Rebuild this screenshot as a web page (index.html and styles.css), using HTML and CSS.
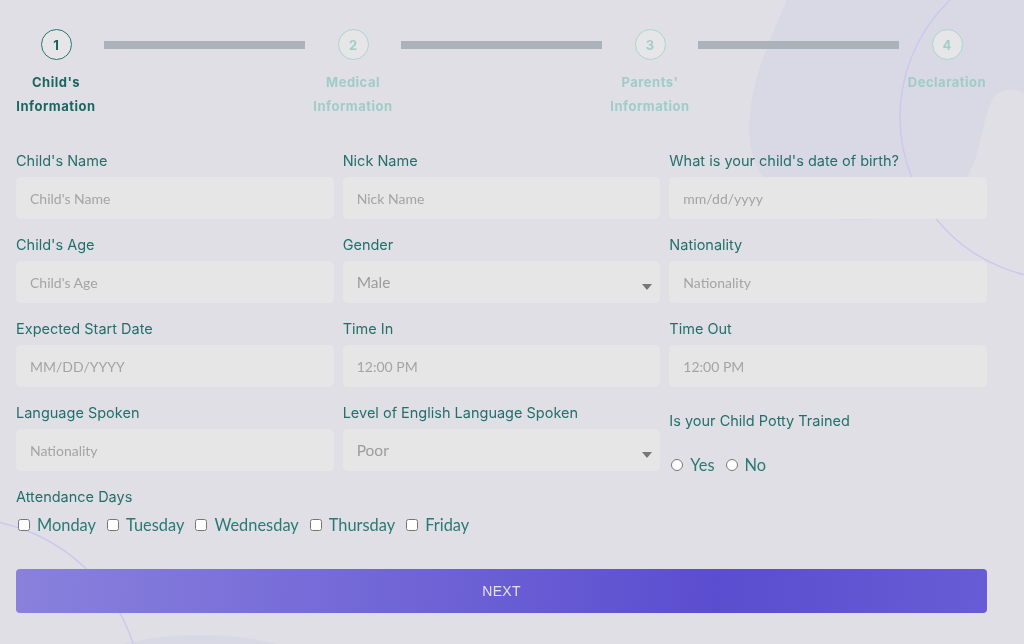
FILE: index.html
```html
<!DOCTYPE html>
<html lang="en">
<head>
  <meta charset="UTF-8">
  <title>Enrollment - Child's Information</title>
  <link rel="stylesheet" href="styles.css">
</head>
<body>
  <svg class="backdrop" width="1024" height="644" viewBox="0 0 1024 644" aria-hidden="true">
    <path class="blob" d="M787,0 C770,40 745,90 750,140 C755,190 800,222 860,220 C920,218 960,200 975,160 C985,130 985,95 1005,90 C1015,88 1024,92 1024,95 L1024,0 Z"/>
    <ellipse class="blob" cx="200" cy="690" rx="140" ry="55"/>
    <circle class="ring" cx="1062" cy="117" r="162"/>
    <circle class="ring" cx="-40" cy="700" r="182"/>
  </svg>

  <main class="wizard">
    <ol class="steps">
      <li class="step active">
        <span class="num">1</span>
        <span class="name">Child's<br>Information</span>
      </li>
      <li class="bar"></li>
      <li class="step">
        <span class="num">2</span>
        <span class="name">Medical<br>Information</span>
      </li>
      <li class="bar"></li>
      <li class="step">
        <span class="num">3</span>
        <span class="name">Parents'<br>Information</span>
      </li>
      <li class="bar"></li>
      <li class="step">
        <span class="num">4</span>
        <span class="name">Declaration</span>
      </li>
    </ol>

    <form class="form" id="childForm">
      <div class="field">
        <label for="name">Child's Name</label>
        <input id="name" type="text" placeholder="Child's Name">
      </div>
      <div class="field">
        <label for="nick">Nick Name</label>
        <input id="nick" type="text" placeholder="Nick Name">
      </div>
      <div class="field">
        <label for="dob">What is your child's date of birth?</label>
        <input id="dob" type="text" placeholder="mm/dd/yyyy">
      </div>

      <div class="field">
        <label for="age">Child's Age</label>
        <input id="age" type="text" placeholder="Child's Age">
      </div>
      <div class="field">
        <label for="gender">Gender</label>
        <div class="select">
          <select id="gender">
            <option>Male</option>
            <option>Female</option>
          </select>
        </div>
      </div>
      <div class="field">
        <label for="nat">Nationality</label>
        <input id="nat" type="text" placeholder="Nationality">
      </div>

      <div class="field">
        <label for="start">Expected Start Date</label>
        <input id="start" type="text" placeholder="MM/DD/YYYY">
      </div>
      <div class="field">
        <label for="tin">Time In</label>
        <input id="tin" type="text" placeholder="12:00 PM">
      </div>
      <div class="field">
        <label for="tout">Time Out</label>
        <input id="tout" type="text" placeholder="12:00 PM">
      </div>

      <div class="field">
        <label for="lang">Language Spoken</label>
        <input id="lang" type="text" placeholder="Nationality">
      </div>
      <div class="field">
        <label for="eng">Level of English Language Spoken</label>
        <div class="select">
          <select id="eng">
            <option>Poor</option>
            <option>Fair</option>
            <option>Good</option>
          </select>
        </div>
      </div>
      <div class="field potty">
        <label>Is your Child Potty Trained</label>
        <div class="choices">
          <label class="opt"><input type="radio" name="potty"> Yes</label>
          <label class="opt"><input type="radio" name="potty"> No</label>
        </div>
      </div>

      <div class="field wide">
        <label>Attendance Days</label>
        <div class="choices days">
          <label class="opt"><input type="checkbox"> Monday</label>
          <label class="opt"><input type="checkbox"> Tuesday</label>
          <label class="opt"><input type="checkbox"> Wednesday</label>
          <label class="opt"><input type="checkbox"> Thursday</label>
          <label class="opt"><input type="checkbox"> Friday</label>
        </div>
      </div>

      <button type="submit" class="next">NEXT</button>
    </form>
  </main>
</body>
</html>
```

FILE: styles.css
```css
/* wizard paso 1 - datos del niño */
html, body { margin: 0; height: 100%; }
body { background-color: #e0dfe5; font-family: "Inter", "Liberation Sans", sans-serif; color: #23706b; overflow: hidden; }

.backdrop { position: fixed; left: 0; top: 0; z-index: 0; pointer-events: none; }
.backdrop .blob { fill: #d9d8e5; }
.backdrop .ring { fill: none; stroke: #cdc8ee; stroke-width: 1.5; }

.wizard { position: relative; z-index: 1; padding: 29px 37px 0 16px; }

/* stepper */
.steps { list-style: none; margin: 0; padding: 0; display: flex; align-items: flex-start; gap: 8px; }
.step { width: 80px; flex: none; display: flex; flex-direction: column; align-items: center; }
.step .num { width: 29px; height: 29px; border: 1.5px solid #a9d5ce; border-radius: 50%; background-color: #e6e6e9; color: #a3cec7; font-size: 13px; font-weight: 700; display: flex; align-items: center; justify-content: center; }
.step .name { margin-top: 10px; text-align: center; font-size: 13px; font-weight: 700; letter-spacing: 0.5px; line-height: 24px; color: #9fcdc6; white-space: nowrap; }
.step.active .num { border-color: #2a7671; color: #1b5f5a; }
.step.active .name { color: #1b6660; }
.bar { flex: 1; height: 8px; margin-top: 12px; background-color: #abb2b9; }

/* form */
.form { margin-top: 33px; display: grid; grid-template-columns: repeat(3, 1fr); column-gap: 9px; row-gap: 16px; }
.field { display: flex; flex-direction: column; }
.field > label { font-size: 14.5px; line-height: 20px; margin-bottom: 6px; color: #23706b; }
.field input[type=text], .select select { height: 42px; box-sizing: border-box; border: none; border-radius: 5px; background-color: #e6e6e7; padding: 0 14px; font-family: "Lato", "Liberation Sans", sans-serif; font-size: 14px; color: #555; outline: none; width: 100%; }
.field input::placeholder { color: #a4a4a4; }

.select { position: relative; }
.select select { appearance: none; -webkit-appearance: none; font-size: 15.5px; color: #9c9c9c; }
.select::after { content: ""; position: absolute; right: 8px; top: 23px; border-left: 5px solid transparent; border-right: 5px solid transparent; border-top: 6px solid #777; }

.potty > label { margin-top: 8px; }
.potty .choices { margin-bottom: -4px; }
.choices { display: flex; align-items: center; gap: 9px; margin-top: 18px; }
.opt { display: flex; align-items: center; font-family: "Lato", "Liberation Sans", sans-serif; font-size: 16.4px; line-height: 20px; color: #2a7a74; }
.opt input { margin: 0 7px 0 2px; width: 12px; height: 12px; }

.wide { grid-column: 1 / -1; }
.days { margin-top: 2px; }

.next { grid-column: 1 / -1; margin-top: 18px; height: 44px; border: none; border-radius: 4px; background: linear-gradient(95deg, #8981dc 0%, #776cd8 30%, #5b4dcf 72%, #675cd5 100%); color: #e2e0f8; font-family: "Liberation Sans", Arial, sans-serif; font-size: 14px; letter-spacing: 0.3px; cursor: pointer; }
```
